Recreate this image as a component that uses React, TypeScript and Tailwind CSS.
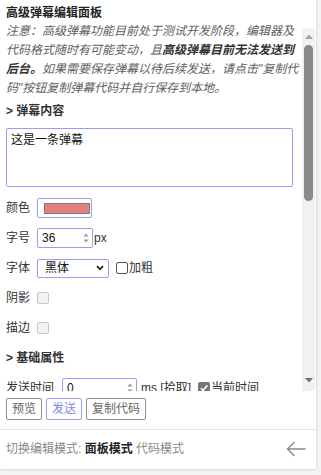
import React from "react";

function Spinner() {
  return (
    <svg width="6" height="12" viewBox="0 0 6 12" className="shrink-0">
      <path d="M0.5 4.5 L3 1.5 L5.5 4.5 Z" fill="#9a9a9a" />
      <path d="M0.5 7.5 L3 10.5 L5.5 7.5 Z" fill="#9a9a9a" />
    </svg>
  );
}

function Row({ label, children }: { label: string; children?: React.ReactNode }) {
  return (
    <div className="h-[30px] flex items-center">
      <span className="w-[31px] shrink-0 leading-[20px]">{label}</span>
      {children}
    </div>
  );
}

export default function App() {
  return (
    <div className="w-[321px] h-[475px] bg-[#f3f3f3] font-['Liberation_Sans','Noto_Sans_CJK_SC',sans-serif] text-[12px] text-[#333]">
      <div className="w-[316px] h-[469px] bg-white shadow-[0_0_3px_rgba(0,0,0,0.18)] flex flex-col">
        <div className="h-[22px] pt-[3px] pl-[6px] font-bold leading-[20px] text-[#222]">高级弹幕编辑面板</div>
        <div className="flex h-[369px]">
          <div className="flex-1 overflow-hidden pl-[6px]">
            <p className="italic text-[#5e5e5e] leading-[19px] whitespace-nowrap">
              注意：高级弹幕功能目前处于测试开发阶段，编辑器及
              <br />
              代码格式随时有可能变动，且<b className="text-[#333]">高级弹幕目前无法发送到</b>
              <br />
              <b className="text-[#333]">后台。</b>如果需要保存弹幕以待后续发送，请点击"复制代
              <br />
              码"按钮复制弹幕代码并自行保存到本地。
            </p>
            <div className="mt-[4px] font-bold leading-[19px]">&gt; 弹幕内容</div>
            <div className="mt-[7px] w-[287px] h-[59px] border border-[#9c9cf7] rounded-[2px] px-[4px] pt-[3px] leading-[16px] text-[#111]">
              这是一条弹幕
            </div>
            <div className="mt-[6px]">
              <Row label="颜色">
                <div className="w-[55px] h-[20px] border border-[#9c9cf7] rounded-[2px] flex items-center pl-[6px]">
                  <div className="w-[46px] h-[11px] bg-[#e68080] border border-[#7a7a7a]" />
                </div>
              </Row>
              <Row label="字号">
                <div className="w-[56px] h-[20px] border border-[#9c9cf7] rounded-[2px] flex items-center pl-[4px] pr-[3px] justify-between text-[#111]">
                  <span className="leading-[18px]">36</span>
                  <Spinner />
                </div>
                <span className="ml-[1px] leading-[20px]">px</span>
              </Row>
              <Row label="字体">
                <div className="w-[72px] h-[19px] border border-[#9c9cf7] rounded-[2px] flex items-center justify-between pl-[7px] pr-[4px] text-[#111]">
                  <span className="leading-[17px]">黑体</span>
                  <svg width="8" height="6" viewBox="0 0 8 6">
                    <path d="M1 1.2 L4 4.3 L7 1.2" fill="none" stroke="#222" strokeWidth="1.8" />
                  </svg>
                </div>
                <span className="ml-[7px] w-[12px] h-[12px] border border-[#555] rounded-[2px] bg-white" />
                <span className="ml-[1px] leading-[20px]">加粗</span>
              </Row>
              <Row label="阴影">
                <span className="w-[12px] h-[12px] border border-[#c8c8c8] rounded-[2px] bg-[#f2f2f2]" />
              </Row>
              <Row label="描边">
                <span className="w-[12px] h-[12px] border border-[#c8c8c8] rounded-[2px] bg-[#f2f2f2]" />
              </Row>
              <div className="h-[30px] flex items-center font-bold">&gt; 基础属性</div>
              <div className="h-[30px] flex items-center">
                <span className="w-[56px] shrink-0 leading-[20px]">发送时间</span>
                <div className="w-[75px] h-[20px] border border-[#9c9cf7] rounded-[2px] flex items-center justify-between pl-[4px] pr-[3px] text-[#111]">
                  <span className="leading-[18px]">0</span>
                  <Spinner />
                </div>
                <span className="ml-[4px] leading-[20px]">ms [拾取]</span>
                <span className="ml-[7px] w-[12px] h-[12px] rounded-[2px] bg-[#767676] flex items-center justify-center">
                  <svg width="10" height="10" viewBox="0 0 10 10">
                    <path d="M1.8 5.2 L4 7.4 L8.4 2.4" fill="none" stroke="#fff" strokeWidth="1.6" />
                  </svg>
                </span>
                <span className="ml-[1px] leading-[20px]">当前时间</span>
              </div>
            </div>
          </div>
          <div className="w-[13px] mt-[6px] h-[363px] bg-[#f1f1f1] flex flex-col items-center">
            <svg width="8" height="5" viewBox="0 0 8 5" className="mt-[6px]">
              <path d="M0 5 L4 0.5 L8 5 Z" fill="#a3a3a3" />
            </svg>
            <div className="mt-[6px] w-[9px] h-[156px] rounded-full bg-[#8a8a8a]" />
            <div className="flex-1" />
            <svg width="8" height="5" viewBox="0 0 8 5" className="mb-[8px]">
              <path d="M0 0 L8 0 L4 4.5 Z" fill="#707070" />
            </svg>
          </div>
          <div className="w-[1px]" />
        </div>
        <div className="mt-[7px] pl-[6px] flex gap-[4px]">
          <span className="h-[22px] px-[5px] border border-[#8c8c8c] rounded-[2px] leading-[20px] text-[#666]">预览</span>
          <span className="h-[22px] px-[5px] border border-[#9c9cf7] rounded-[2px] leading-[20px] text-[#8484ee]">发送</span>
          <span className="h-[22px] px-[5px] border border-[#8c8c8c] rounded-[2px] leading-[20px] text-[#666]">复制代码</span>
        </div>
        <div className="mt-[9px] border-t border-[#e6e6e6] h-[39px] flex items-center justify-between pl-[6px] pr-[10px]">
          <div className="leading-[20px] text-[#888]">
            切换编辑模式: <b className="text-[#222]">面板模式</b> 代码模式
          </div>
          <svg width="20" height="16" viewBox="0 0 20 16">
            <path d="M19.5 8 H1.5 M8.5 1 L1.5 8 L8.5 15" fill="none" stroke="#8a8a8a" strokeWidth="1.4" />
          </svg>
        </div>
      </div>
    </div>
  );
}
